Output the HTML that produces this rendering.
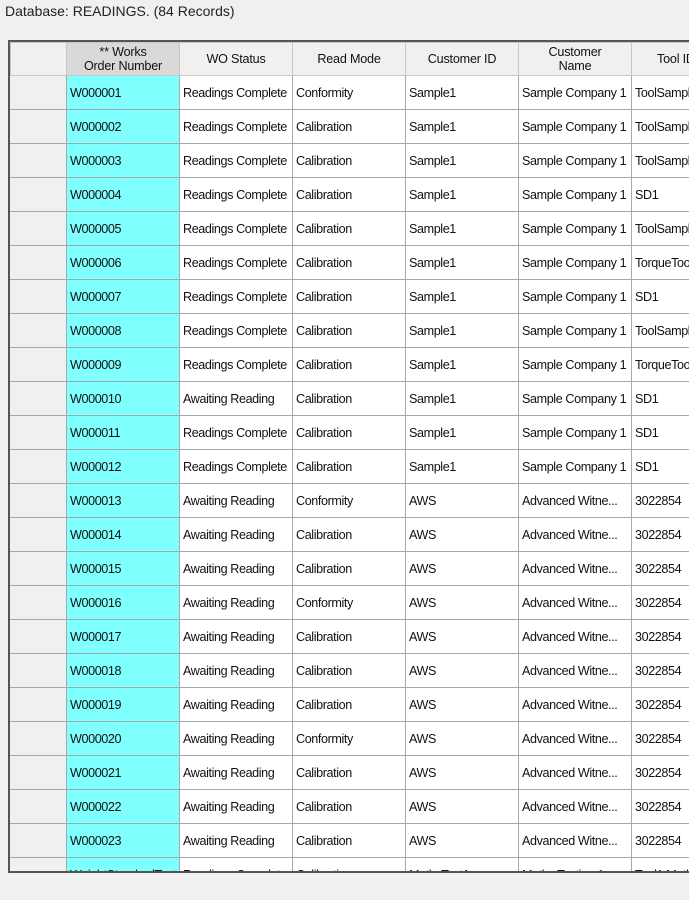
<!DOCTYPE html>
<html><head><style>
body{margin:0;width:689px;height:900px;background:#f0f0f0;font-family:"Liberation Sans",sans-serif;overflow:hidden;position:relative}
.t{position:absolute;left:5px;top:3px;font-size:14px;color:#222}
.g{position:absolute;left:8px;top:40px;width:690px;height:829px;border:2px solid #555;border-right:none;background:#fff;overflow:hidden}
table{border-collapse:collapse;table-layout:fixed;width:701px;font-size:12.6px;letter-spacing:-0.4px;color:#111}
td{height:33px;padding:0 0 0 3px;border:1px solid #a8a8a8;white-space:nowrap;overflow:hidden;text-overflow:clip}
tr.h td{height:32px;background:#f0f0f0;text-align:center;line-height:14px;padding:0;border-color:#c8c8c8;letter-spacing:-0.2px}
tr.h td.s{background:#d9d9d9}
td.r{background:#f0f0f0;border-color:#f0f0f0 #a8a8a8 #a8a8a8 #f0f0f0}
td.c{background:#80ffff}
</style></head><body>
<div class="t">Database: READINGS. (84 Records)</div>
<div class="g"><table>
<colgroup><col style="width:56px"><col style="width:113px"><col style="width:113px"><col style="width:113px"><col style="width:113px"><col style="width:113px"><col style="width:80px"></colgroup>
<tr class="h"><td class="r" style="background:#f0f0f0"></td><td class="s">** Works<br>Order Number</td><td>WO Status</td><td>Read Mode</td><td>Customer ID</td><td>Customer<br>Name</td><td style="text-align:left;padding-left:25px">Tool ID</td></tr>
<tr><td class="r"></td><td class="c">W000001</td><td>Readings Complete</td><td>Conformity</td><td>Sample1</td><td>Sample Company 1</td><td>ToolSample</td></tr>
<tr><td class="r"></td><td class="c">W000002</td><td>Readings Complete</td><td>Calibration</td><td>Sample1</td><td>Sample Company 1</td><td>ToolSample</td></tr>
<tr><td class="r"></td><td class="c">W000003</td><td>Readings Complete</td><td>Calibration</td><td>Sample1</td><td>Sample Company 1</td><td>ToolSample</td></tr>
<tr><td class="r"></td><td class="c">W000004</td><td>Readings Complete</td><td>Calibration</td><td>Sample1</td><td>Sample Company 1</td><td>SD1</td></tr>
<tr><td class="r"></td><td class="c">W000005</td><td>Readings Complete</td><td>Calibration</td><td>Sample1</td><td>Sample Company 1</td><td>ToolSample</td></tr>
<tr><td class="r"></td><td class="c">W000006</td><td>Readings Complete</td><td>Calibration</td><td>Sample1</td><td>Sample Company 1</td><td>TorqueTool</td></tr>
<tr><td class="r"></td><td class="c">W000007</td><td>Readings Complete</td><td>Calibration</td><td>Sample1</td><td>Sample Company 1</td><td>SD1</td></tr>
<tr><td class="r"></td><td class="c">W000008</td><td>Readings Complete</td><td>Calibration</td><td>Sample1</td><td>Sample Company 1</td><td>ToolSample</td></tr>
<tr><td class="r"></td><td class="c">W000009</td><td>Readings Complete</td><td>Calibration</td><td>Sample1</td><td>Sample Company 1</td><td>TorqueTool</td></tr>
<tr><td class="r"></td><td class="c">W000010</td><td>Awaiting Reading</td><td>Calibration</td><td>Sample1</td><td>Sample Company 1</td><td>SD1</td></tr>
<tr><td class="r"></td><td class="c">W000011</td><td>Readings Complete</td><td>Calibration</td><td>Sample1</td><td>Sample Company 1</td><td>SD1</td></tr>
<tr><td class="r"></td><td class="c">W000012</td><td>Readings Complete</td><td>Calibration</td><td>Sample1</td><td>Sample Company 1</td><td>SD1</td></tr>
<tr><td class="r"></td><td class="c">W000013</td><td>Awaiting Reading</td><td>Conformity</td><td>AWS</td><td>Advanced Witne...</td><td>3022854</td></tr>
<tr><td class="r"></td><td class="c">W000014</td><td>Awaiting Reading</td><td>Calibration</td><td>AWS</td><td>Advanced Witne...</td><td>3022854</td></tr>
<tr><td class="r"></td><td class="c">W000015</td><td>Awaiting Reading</td><td>Calibration</td><td>AWS</td><td>Advanced Witne...</td><td>3022854</td></tr>
<tr><td class="r"></td><td class="c">W000016</td><td>Awaiting Reading</td><td>Conformity</td><td>AWS</td><td>Advanced Witne...</td><td>3022854</td></tr>
<tr><td class="r"></td><td class="c">W000017</td><td>Awaiting Reading</td><td>Calibration</td><td>AWS</td><td>Advanced Witne...</td><td>3022854</td></tr>
<tr><td class="r"></td><td class="c">W000018</td><td>Awaiting Reading</td><td>Calibration</td><td>AWS</td><td>Advanced Witne...</td><td>3022854</td></tr>
<tr><td class="r"></td><td class="c">W000019</td><td>Awaiting Reading</td><td>Calibration</td><td>AWS</td><td>Advanced Witne...</td><td>3022854</td></tr>
<tr><td class="r"></td><td class="c">W000020</td><td>Awaiting Reading</td><td>Conformity</td><td>AWS</td><td>Advanced Witne...</td><td>3022854</td></tr>
<tr><td class="r"></td><td class="c">W000021</td><td>Awaiting Reading</td><td>Calibration</td><td>AWS</td><td>Advanced Witne...</td><td>3022854</td></tr>
<tr><td class="r"></td><td class="c">W000022</td><td>Awaiting Reading</td><td>Calibration</td><td>AWS</td><td>Advanced Witne...</td><td>3022854</td></tr>
<tr><td class="r"></td><td class="c">W000023</td><td>Awaiting Reading</td><td>Calibration</td><td>AWS</td><td>Advanced Witne...</td><td>3022854</td></tr>
<tr><td class="r"></td><td class="c">WeightStandardTest</td><td>Readings Complete</td><td>Calibration</td><td>MathsTest1</td><td>Maths Testing 1</td><td>Tool1 Maths</td></tr>
</table></div>
</body></html>
